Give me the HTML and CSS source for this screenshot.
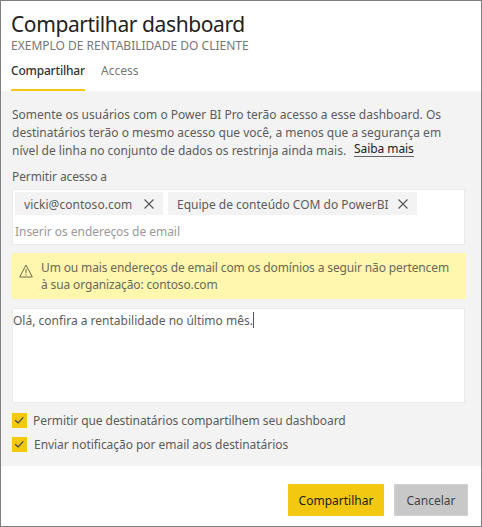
FILE: index.html
```html
<!DOCTYPE html>
<html lang="pt-BR">
<head>
<meta charset="utf-8">
<title>Compartilhar dashboard</title>
<link rel="stylesheet" href="styles.css">
</head>
<body>
<main class="dialog">
  <header class="head">
    <h1 class="title">Compartilhar dashboard</h1>
    <p class="subtitle">EXEMPLO DE RENTABILIDADE DO CLIENTE</p>
    <nav class="tabs">
      <a class="tab tab-active">Compartilhar</a>
      <a class="tab">Access</a>
    </nav>
  </header>
  <section class="content">
    <p class="intro">Somente os usuários com o Power BI Pro terão acesso a esse dashboard. Os<br>destinatários terão o mesmo acesso que você, a menos que a segurança em<br>nível de linha no conjunto de dados os restrinja ainda mais.<a class="more">Saiba mais</a></p>
    <div class="label">Permitir acesso a</div>
    <div class="recipients">
      <div class="chips">
        <div class="chip chip-user">vicki@contoso.com<svg class="remove" viewBox="0 0 10 10"><path d="M.5.5l9 9M9.5.5l-9 9"/></svg></div>
        <div class="chip chip-group">Equipe de conteúdo COM do PowerBI<svg class="remove" viewBox="0 0 10 10"><path d="M.5.5l9 9M9.5.5l-9 9"/></svg></div>
      </div>
      <div class="placeholder">Inserir os endereços de email</div>
    </div>
    <div class="warning">
      <svg class="alert" viewBox="0 0 14 14"><path d="M7 1L13.3 13H.7z"/><path d="M7 5v4.3M7 10.3v1.2"/></svg>
      <p>Um ou mais endereços de email com os domínios a seguir não pertencem<br>à sua organização: contoso.com</p>
    </div>
    <div class="message">Olá, confira a rentabilidade no último mês.<i class="caret"></i></div>
    <div class="option"><svg class="check" viewBox="0 0 15 15"><path d="M3.2 7.2l2.9 2.7 5.2-5.5"/></svg><span>Permitir que destinatários compartilhem seu dashboard</span></div>
    <div class="option"><svg class="check" viewBox="0 0 15 15"><path d="M3.2 7.2l2.9 2.7 5.2-5.5"/></svg><span class="notify">Enviar notificação por email aos destinatários</span></div>
  </section>
  <footer class="foot">
    <button class="btn primary">Compartilhar</button>
    <button class="btn">Cancelar</button>
  </footer>
</main>
</body>
</html>
```
FILE: styles.css
```css
* { box-sizing: border-box; margin: 0; padding: 0; }
body { font-family: "Noto Sans", "Open Sans", sans-serif; font-size: 12px; color: #5c5c5c; background: #fff; }
.dialog { display: flex; flex-direction: column; width: 482px; height: 527px; border: 1px solid #7f7f7f; overflow: hidden; white-space: nowrap; }
.head { height: 90px; padding: 9px 10px 0; display: flex; flex-direction: column; }
.title { font-size: 21px; font-weight: 400; line-height: 29px; letter-spacing: -0.4px; color: #222; }
.subtitle { font-size: 12px; line-height: 13px; color: #777; }
.tabs { display: flex; gap: 16px; margin-top: auto; }
.tab { height: 30px; line-height: 20px; color: #777; }
.tab-active { width: 74px; font-weight: 500; letter-spacing: -0.2px; color: #333; border-bottom: 2px solid #f2c811; }
.content { height: 375px; padding: 15px 16px 0 11px; background: #f3f3f3; display: flex; flex-direction: column; }
.intro { line-height: 18px; }
.more { display: inline-block; line-height: 15px; margin-left: 8px; letter-spacing: -0.08px; color: #222; border-bottom: 1px solid #666; position: relative; top: -2px; }
.label { line-height: 18px; margin-top: 8px; letter-spacing: -0.1px; }
.recipients { height: 56px; margin-top: 3px; padding: 2px; background: #fff; border: 1px solid #ebebeb; }
.chips { display: flex; gap: 5px; }
.chip { height: 23px; background: #f3f3f3; display: flex; align-items: center; padding: 1px 0 0 9px; }
.chip-user { width: 148px; letter-spacing: 0.03px; gap: 12px; }
.chip-group { width: 249px; gap: 9px; }
.remove { width: 10px; height: 10px; fill: none; stroke: #555; stroke-width: 1.1; }
.placeholder { line-height: 18px; margin-top: 8px; letter-spacing: -0.04px; color: #999; }
.warning { height: 46px; margin-top: 8px; margin-right: -1px; background: #fff7ad; display: flex; padding: 6px 7px; gap: 8px; line-height: 17px; letter-spacing: -0.135px; color: #6b6957; }
.alert { flex: none; width: 14px; height: 14px; margin-top: 5px; fill: none; stroke: #6d6a50; stroke-width: 1; }
.message { height: 95px; margin-top: 9px; margin-bottom: 9px; background: #fff; border: 1px solid #ebebeb; padding: 3px 0; line-height: 18px; display: flex; }
.caret { width: 1px; height: 16px; background: #555; }
.option { display: flex; align-items: center; gap: 6px; height: 16px; margin-bottom: 8px; letter-spacing: -0.07px; }
.option span { padding-top: 1px; }
.check { width: 15px; height: 15px; background: #f2c811; fill: none; stroke: #444; stroke-width: 1.3; }
.notify { margin-left: 1px; letter-spacing: -0.04px; }
.foot { flex: 1; display: flex; justify-content: flex-end; gap: 10px; padding: 18px 13px 0; }
.btn { height: 32px; width: 74px; border: 1px solid #d2d2d2; background: #c8c8c8; color: #444; font: inherit; }
.primary { width: 96px; background: #f2c811; border-color: #f2c811; color: #222; }
```
